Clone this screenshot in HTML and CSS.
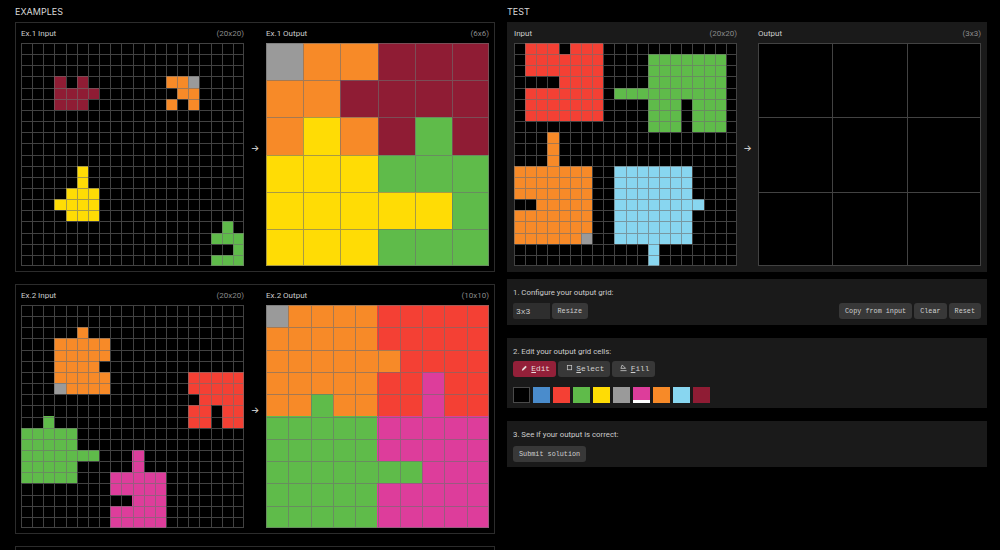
FILE: index.html
```html
<!DOCTYPE html>
<html lang="en">
<head>
	<meta charset="UTF-8">
	<title>ARC task</title>
	<link rel="stylesheet" href="styles.css">
</head>
<body>
	<div class="page">
		<div class="col col-examples">
			<div class="heading">EXAMPLES</div>
			<div class="panel">
				<div class="pair">
					<div class="side">
						<div class="side-head"><span>Ex.1 Input</span><span class="dim">(20x20)</span></div>
						<div class="grid" id="ex1in"></div>
					</div>
					<div class="arrow">&rarr;</div>
					<div class="side">
						<div class="side-head"><span>Ex.1 Output</span><span class="dim">(6x6)</span></div>
						<div class="grid" id="ex1out"></div>
					</div>
				</div>
			</div>
			<div class="panel">
				<div class="pair">
					<div class="side">
						<div class="side-head"><span>Ex.2 Input</span><span class="dim">(20x20)</span></div>
						<div class="grid" id="ex2in"></div>
					</div>
					<div class="arrow">&rarr;</div>
					<div class="side">
						<div class="side-head"><span>Ex.2 Output</span><span class="dim">(10x10)</span></div>
						<div class="grid" id="ex2out"></div>
					</div>
				</div>
			</div>
			<div class="panel panel-cut"></div>
		</div>

		<div class="col col-test">
			<div class="heading">TEST</div>
			<div class="panel panel-grey">
				<div class="pair">
					<div class="side">
						<div class="side-head"><span>Input</span><span class="dim">(20x20)</span></div>
						<div class="grid" id="testin"></div>
					</div>
					<div class="arrow">&rarr;</div>
					<div class="side">
						<div class="side-head"><span>Output</span><span class="dim">(3x3)</span></div>
						<div class="grid" id="testout"></div>
					</div>
				</div>
			</div>

			<div class="step step-one">
				<div class="step-title">1. Configure your output grid:</div>
				<div class="row">
					<input class="size" type="text" value="3x3">
					<button class="btn">Resize</button>
					<div class="row row-end">
						<button class="btn">Copy from input</button>
						<button class="btn">Clear</button>
						<button class="btn">Reset</button>
					</div>
				</div>
			</div>

			<div class="step step-two">
				<div class="step-title">2. Edit your output grid cells:</div>
				<div class="row">
					<button class="btn btn-tool active">
						<svg class="tool-icon" viewBox="0 0 8 8"><path d="M1 7 L1.4 5.2 L5.2 1.4 L6.6 2.8 L2.8 6.6 Z" fill="currentColor"/></svg>
						<span><u>E</u>dit</span>
					</button>
					<button class="btn btn-tool">
						<svg class="tool-icon" viewBox="0 0 8 8"><rect x="1.5" y="1" width="5" height="5" fill="none" stroke="currentColor" stroke-width=".8"/></svg>
						<span><u>S</u>elect</span>
					</button>
					<button class="btn btn-tool">
						<svg class="tool-icon" viewBox="0 0 8 8"><path d="M2.5 .5 L4 2 L6.4 4.4 L1 4.4 Z M.5 7 H7.5" fill="none" stroke="currentColor" stroke-width=".9"/></svg>
						<span><u>F</u>ill</span>
					</button>
				</div>
				<div class="swatches">
					<div class="swatch c0 swatch-black"></div>
					<div class="swatch c1"></div>
					<div class="swatch c2"></div>
					<div class="swatch c3"></div>
					<div class="swatch c4"></div>
					<div class="swatch c5"></div>
					<div class="swatch c6 swatch-on"></div>
					<div class="swatch c7"></div>
					<div class="swatch c8"></div>
					<div class="swatch c9"></div>
				</div>
			</div>

			<div class="step step-three">
				<div class="step-title">3. See if your output is correct:</div>
				<div class="row">
					<button class="btn">Submit solution</button>
				</div>
			</div>
		</div>
	</div>
	<script src="app.js"></script>
</body>
</html>
```

FILE: styles.css
```css
html, body {
	height: 550px;
	margin: 0;
	overflow: hidden;
	background-color: #000;
}

body {
	font-family: "Roboto", "Liberation Sans", sans-serif;
	font-size: 8px;
	color: #cccccc;
}

.page {
	display: flex;
	gap: 12px;
	padding-left: 15px;
}

.col {
	display: flex;
	flex-direction: column;
	width: 480px;
}

.col-examples {
	gap: 12px;
}

.heading {
	height: 22px;
	margin-bottom: -12px;
	line-height: 23px;
	font-family: "Inter", "Liberation Sans", sans-serif;
	font-size: 9px;
	color: #d8d8d8;
}

.col-test .heading {
	margin-bottom: 0;
}

.panel {
	box-sizing: border-box;
	height: 250px;
	padding: 0 5px;
	border: 1px solid #2c2c2c;
}

.panel-grey {
	padding-left: 6px;
	border-color: #1a1a1a;
	background-color: #1a1a1a;
}

.panel-cut {
	height: 20px;
}

.pair {
	display: flex;
	height: 100%;
	align-items: flex-start;
}

.side {
	width: 223px;
}

.side-head {
	display: flex;
	justify-content: space-between;
	align-items: center;
	height: 20px;
}

.dim {
	color: #8a8a8a;
}

.arrow {
	display: flex;
	width: 22px;
	align-self: center;
	justify-content: center;
	font-family: "Inter", "Liberation Sans", sans-serif;
	font-size: 9px;
	color: #e8e8e8;
}

.panel-grey .arrow {
	width: 21px;
}

.grid {
	position: relative;
	display: grid;
	width: 223px;
	height: 223px;
	background-color: #000;
}

.lines {
	position: absolute;
	top: 0;
	left: 0;
	width: 223px;
	height: 223px;
}

.lines path {
	fill: none;
	stroke: rgba(110, 110, 110, .6);
	stroke-width: 1px;
	shape-rendering: crispEdges;
}

.c0 { background-color: #000; }
.c1 { background-color: #4a8ccc; }
.c2 { background-color: #f44034; }
.c3 { background-color: #5fbb4a; }
.c4 { background-color: #ffdc05; }
.c5 { background-color: #9a9a9a; }
.c6 { background-color: #dd3d9b; }
.c7 { background-color: #f78a28; }
.c8 { background-color: #88d6f0; }
.c9 { background-color: #8f1c34; }

.step {
	box-sizing: border-box;
	margin-top: 13px;
	padding: 0 6px;
	background-color: #1a1a1a;
}

.step-one {
	height: 46px;
	margin-top: 7px;
}

.step-two {
	height: 70px;
}

.step-three {
	height: 46px;
}

.step-title {
	box-sizing: border-box;
	height: 24px;
	padding-top: 8.5px;
	line-height: 9px;
	font-size: 7.8px;
}

.step-two .step-title {
	height: 23px;
}

.step-three .step-title {
	height: 25px;
}

.row {
	display: flex;
	gap: 2px;
}

.row-end {
	margin-left: auto;
}

.size {
	box-sizing: border-box;
	width: 36.5px;
	height: 16px;
	padding: 0 3px;
	border: none;
	border-radius: 2px 0 0 2px;
	background-color: #2e2e2e;
	font-family: "Liberation Mono", monospace;
	font-size: 8px;
	color: #cfcfcf;
}

.btn {
	box-sizing: border-box;
	height: 16px;
	padding: 0 6px;
	border: none;
	border-radius: 3px;
	background-color: #383838;
	font-family: "Liberation Mono", monospace;
	font-size: 6.8px;
	color: #cfcfcf;
	white-space: nowrap;
}

.btn-tool {
	display: flex;
	gap: 3.3px;
	align-items: center;
	padding: 0 6px 0 8px;
	font-size: 7.8px;
}

.btn-tool u {
	text-underline-offset: 1px;
}

.active {
	background-color: #932039;
	color: #e8dcdc;
}

.tool-icon {
	width: 7px;
	height: 8px;
	margin-top: -3px;
}

.swatches {
	display: flex;
	gap: 3.5px;
	margin-top: 9.5px;
}

.swatch {
	box-sizing: border-box;
	width: 16.5px;
	height: 16.5px;
}

.swatch-black {
	border: 1px solid #4a4a4a;
}

.swatch-on {
	border-bottom: 3px solid #fff;
}
```

FILE: app.js
```js
(function(){
	var SIZE = 223;

	// [colour, first row, last row, first col, last col]
	var shapes = {
		ex1in: [
			[9,3,3,3,3],[9,3,3,5,5],[9,4,4,3,6],[9,5,5,3,5],
			[7,3,3,13,14],[5,3,3,15,15],[7,4,4,14,15],[7,5,5,13,13],[7,5,5,15,15],
			[4,11,12,5,5],[4,13,13,4,6],[4,14,14,3,6],[4,15,15,4,6],
			[3,16,16,18,18],[3,17,17,17,19],[3,18,18,19,19],[3,19,19,17,19]
		],
		ex2in: [
			[7,2,2,5,5],[7,3,7,3,7],[0,5,5,7,7],[5,7,7,3,3],
			[2,6,7,15,19],[2,8,8,16,19],[2,9,10,15,16],[2,9,10,18,19],
			[3,10,10,2,2],[3,11,15,0,4],[3,13,13,5,6],
			[6,13,14,10,10],[6,15,19,8,12],[0,17,17,8,9]
		],
		testin: [
			[2,0,6,1,7],[0,0,0,4,4],[0,3,3,1,3],
			[3,1,7,12,18],[3,4,4,9,11],[0,5,7,15,15],
			[7,8,10,3,3],[7,11,17,0,6],[0,14,14,0,1],[5,17,17,6,6],
			[8,11,17,9,15],[8,14,14,16,16],[8,18,19,12,12]
		]
	};

	var rows = {
		ex1out: ['577999', '779999', '747939', '444333', '444443', '444333'],
		ex2out: [
			'5777722222', '7777722222', '7777772222', '7777722622', '7737722622',
			'3333366666', '3333366666', '3333333666', '3333366666', '3333366666'
		],
		testout: ['000', '000', '000']
	};

	function blank(size) {
		var out = [];
		for(var r = 0; r < size; r++){
			out.push(new Array(size + 1).join('0').split(''));
		}
		return out;
	}

	function paint(list) {
		var out = blank(20);
		list.forEach(function(s){
			for(var r = s[1]; r <= s[2]; r++){
				for(var c = s[3]; c <= s[4]; c++){
					out[r][c] = s[0];
				}
			}
		});
		return out;
	}

	// lines go on top of the cells so they tint with the colour below,
	// rounded to whole pixels so each one stays 1px and equally strong
	function lines(n) {
		var d = '';
		for(var i = 0; i <= n; i++){
			var p = Math.min(Math.round(i * SIZE / n), SIZE - 1) + 0.5;
			d += 'M' + p + ' 0V' + SIZE + 'M0 ' + p + 'H' + SIZE;
		}
		var ns = 'http://www.w3.org/2000/svg';
		var svg = document.createElementNS(ns, 'svg');
		var path = document.createElementNS(ns, 'path');
		svg.setAttribute('class', 'lines');
		svg.setAttribute('viewBox', '0 0 ' + SIZE + ' ' + SIZE);
		path.setAttribute('d', d);
		svg.appendChild(path);
		return svg;
	}

	function draw(id, data) {
		var el = document.getElementById(id);
		var n = data.length;
		el.style.gridTemplateColumns = 'repeat(' + n + ', 1fr)';
		el.style.gridTemplateRows = 'repeat(' + n + ', 1fr)';
		for(var r = 0; r < n; r++){
			for(var c = 0; c < n; c++){
				var cell = document.createElement('div');
				cell.className = 'c' + data[r][c];
				el.appendChild(cell);
			}
		}
		el.appendChild(lines(n));
	}

	for(var a in shapes){
		draw(a, paint(shapes[a]));
	}
	for(var b in rows){
		draw(b, rows[b]);
	}
})();
```
